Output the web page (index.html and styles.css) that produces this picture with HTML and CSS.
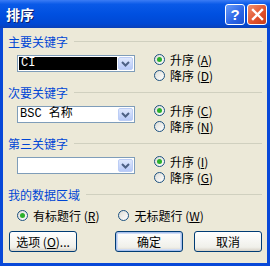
FILE: index.html
```html
<!DOCTYPE html>
<html lang="zh-CN">
<head>
    <meta charset="UTF-8">
    <title>排序</title>
    <link rel="stylesheet" href="styles.css">
</head>
<body>
    <div class="dialog">
        <div class="titlebar">
            <span class="title">排序</span>
            <div class="title-buttons">
                <span class="tbtn help">?</span>
                <span class="tbtn close">
                    <svg width="13" height="13" viewBox="0 0 13 13"><path d="M2 2 L11 11 M11 2 L2 11" stroke="#fff" stroke-width="2.4" stroke-linecap="square"/></svg>
                </span>
            </div>
        </div>

        <div class="body">
            <!-- 主要关键字 -->
            <div class="group">
                <div class="legend"><span>主要关键字</span></div>
                <div class="row">
                    <div class="combo selected">
                        <span class="value">CI</span>
                        <span class="arrow"><svg width="9" height="6" viewBox="0 0 9 6"><path d="M1 1 L4.5 4.5 L8 1" fill="none" stroke="#4d6185" stroke-width="2"/></svg></span>
                    </div>
                    <div class="radios">
                        <label class="radio checked"><i></i>升序 (<u>A</u>)</label>
                        <label class="radio"><i></i>降序 (<u>D</u>)</label>
                    </div>
                </div>
            </div>

            <!-- 次要关键字 -->
            <div class="group">
                <div class="legend"><span>次要关键字</span></div>
                <div class="row">
                    <div class="combo">
                        <span class="value">BSC 名称</span>
                        <span class="arrow"><svg width="9" height="6" viewBox="0 0 9 6"><path d="M1 1 L4.5 4.5 L8 1" fill="none" stroke="#4d6185" stroke-width="2"/></svg></span>
                    </div>
                    <div class="radios">
                        <label class="radio checked"><i></i>升序 (<u>C</u>)</label>
                        <label class="radio"><i></i>降序 (<u>N</u>)</label>
                    </div>
                </div>
            </div>

            <!-- 第三关键字 -->
            <div class="group">
                <div class="legend"><span>第三关键字</span></div>
                <div class="row">
                    <div class="combo">
                        <span class="value"></span>
                        <span class="arrow"><svg width="9" height="6" viewBox="0 0 9 6"><path d="M1 1 L4.5 4.5 L8 1" fill="none" stroke="#4d6185" stroke-width="2"/></svg></span>
                    </div>
                    <div class="radios">
                        <label class="radio checked"><i></i>升序 (<u>I</u>)</label>
                        <label class="radio"><i></i>降序 (<u>G</u>)</label>
                    </div>
                </div>
            </div>

            <!-- 我的数据区域 -->
            <div class="group">
                <div class="legend"><span>我的数据区域</span></div>
                <div class="row inline">
                    <label class="radio checked"><i></i>有标题行 (<u>R</u>)</label>
                    <label class="radio"><i></i>无标题行 (<u>W</u>)</label>
                </div>
            </div>

            <div class="buttons">
                <button class="btn">选项 (<u>O</u>)...</button>
                <div class="right">
                    <button class="btn default">确定</button>
                    <button class="btn">取消</button>
                </div>
            </div>
        </div>
    </div>
</body>
</html>
```

FILE: styles.css
```css
body {
    margin: 0;
    padding: 0;
    font-family: "Noto Sans CJK SC", "Liberation Sans", sans-serif;
    font-size: 12px;
}

.dialog {
    width: 270px;
    height: 266px;
    box-sizing: border-box;
    background: #0848d8;
    display: flex;
    flex-direction: column;
    overflow: hidden;
}

.titlebar {
    height: 28px;
    flex: none;
    display: flex;
    align-items: center;
    justify-content: space-between;
    padding: 0 3px 0 6px;
    background: linear-gradient(to bottom, #3b7cf5 0%, #0a5ae8 15%, #0050e0 50%, #0048d4 85%, #0a40b8 100%);
}

.title {
    color: #fff;
    font-weight: bold;
    font-size: 14px;
    text-shadow: 1px 1px 0 #0a1c6a;
}

.title-buttons {
    display: flex;
    gap: 2px;
}

.tbtn {
    width: 20px;
    height: 21px;
    box-sizing: border-box;
    border: 1px solid #fff;
    border-radius: 3px;
    display: flex;
    align-items: center;
    justify-content: center;
    color: #fff;
    font-weight: bold;
    font-size: 15px;
    font-family: "Liberation Sans", sans-serif;
}

.help {
    background: linear-gradient(135deg, #6a9cf8, #2a64e6 60%, #1c52d0);
}

.close {
    background: linear-gradient(135deg, #f09070, #e0502a 60%, #c83c1a);
}

.body {
    flex: 1;
    margin: 0 3px 3px 3px;
    background: #ece9d8;
    padding: 6px 5px 0 5px;
    display: flex;
    flex-direction: column;
}

.group {
    margin-bottom: 2px;
}

.legend {
    display: flex;
    align-items: center;
    color: #0046d5;
    height: 15px;
    line-height: 15px;
}

.legend::after {
    content: "";
    flex: 1;
    height: 0;
    border-top: 1px solid #d0d0bf;
    margin-left: 6px;
}

.row {
    display: flex;
    align-items: flex-start;
    padding-left: 9px;
    margin-top: 4px;
    height: 30px;
}

.row.inline {
    margin-top: 5px;
    height: 16px;
    align-items: center;
    gap: 19px;
}

.combo {
    width: 118px;
    height: 17px;
    box-sizing: border-box;
    border: 1px solid #7f9db9;
    background: #fff;
    display: flex;
    align-items: stretch;
    margin-top: 2px;
}

.combo .value {
    flex: 1;
    padding-left: 2px;
    line-height: 15px;
    font-family: "Liberation Mono", "Noto Sans CJK SC", monospace;
    font-size: 12px;
    color: #000;
}

.combo.selected .value {
    background: #000;
    color: #fff;
    margin: 1px 0 1px 1px;
    line-height: 13px;
}

.combo .arrow {
    width: 15px;
    margin: 1px;
    box-sizing: border-box;
    border: 1px solid #bccdf5;
    border-radius: 2px;
    background: linear-gradient(to bottom, #dfe8fd, #b7c9f8);
    display: flex;
    align-items: center;
    justify-content: center;
}

.radios {
    display: flex;
    flex-direction: column;
    margin-left: 19px;
    gap: 3px;
}

.radio {
    display: flex;
    align-items: center;
    height: 13px;
    color: #000;
    white-space: nowrap;
}

.radio u {
    text-decoration: underline;
}

.radio i {
    width: 11px;
    height: 11px;
    box-sizing: border-box;
    border: 1px solid #1c5180;
    border-radius: 50%;
    background: linear-gradient(135deg, #dcdcd6, #fff);
    margin-right: 5px;
    display: flex;
    align-items: center;
    justify-content: center;
}

.radio.checked i::after {
    content: "";
    width: 5px;
    height: 5px;
    border-radius: 50%;
    background: #2bb02b;
}

.buttons {
    display: flex;
    justify-content: space-between;
    align-items: center;
    margin-top: 6px;
    padding-left: 1px;
}

.buttons .right {
    display: flex;
    gap: 11px;
}

.btn {
    height: 21px;
    width: 68px;
    padding: 0;
    box-sizing: border-box;
    border: 1px solid #003c74;
    border-radius: 3px;
    background: linear-gradient(to bottom, #ffffff, #f0f0ea 80%, #d6d0c5);
    font-family: "Noto Sans CJK SC", sans-serif;
    font-size: 12px;
    color: #000;
}

.btn.default {
    box-shadow: inset 0 0 0 1px #a8c0ec, inset 0 0 0 2px #cfdcf5;
}
```
